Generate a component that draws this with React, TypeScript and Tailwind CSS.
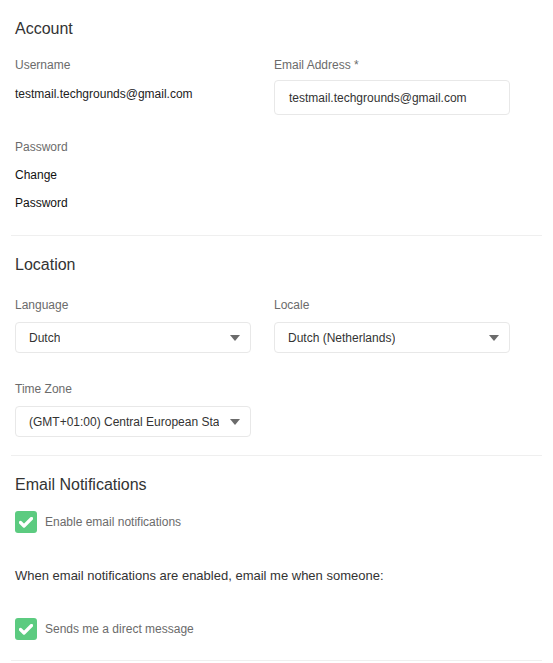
import React from "react";

function Caret() {
  return (
    <svg width="10" height="6" viewBox="0 0 10 6" className="shrink-0">
      <path d="M0 0 L10 0 L5 6 Z" fill="#6b6b6b" />
    </svg>
  );
}

function Select({ value }: { value: string }) {
  return (
    <div className="flex h-[31px] w-[236px] items-center justify-between rounded-[4px] border border-[#e8e8e8] bg-white pl-[13px] pr-[10px]">
      <span className="overflow-hidden whitespace-nowrap text-[12px] leading-[14px] text-[#333]">{value}</span>
      <Caret />
    </div>
  );
}

function Check() {
  return (
    <div className="flex h-[22px] w-[22px] shrink-0 items-center justify-center rounded-[3px] bg-[#5ccb80]">
      <svg width="14" height="11" viewBox="0 0 14 11">
        <path d="M1.5 5.5 L5 9 L12.5 1.5" fill="none" stroke="white" strokeWidth="3.2" strokeLinecap="round" strokeLinejoin="round" />
      </svg>
    </div>
  );
}

export default function App() {
  return (
    <div className="min-h-[663px] w-[553px] bg-white px-[11px] font-['Liberation_Sans',Arial,sans-serif]">
      {/* Account */}
      <section className="border-b border-[#efefef] px-[4px] pb-[25px] pt-[20px]">
        <h2 className="text-[16px] leading-[18px] text-[#333]">Account</h2>
        <div className="mt-[20px] grid grid-cols-[236px_236px] gap-x-[23px]">
          <div>
            <div className="text-[12px] leading-[14px] text-[#6b6b6b]">Username</div>
            <div className="mt-[15px] text-[12px] leading-[14px] text-[#222]">testmail.techgrounds@gmail.com</div>
          </div>
          <div>
            <div className="text-[12px] leading-[14px] text-[#6b6b6b]">Email Address *</div>
            <div className="mt-[8px] flex h-[35px] items-center rounded-[4px] border border-[#e8e8e8] bg-white pl-[14px] text-[12px] leading-[14px] text-[#333]">
              testmail.techgrounds@gmail.com
            </div>
          </div>
        </div>
        <div className="mt-[25px] text-[12px] leading-[14px] text-[#6b6b6b]">Password</div>
        <div className="mt-[14px] text-[12px] leading-[14px] text-[#111]">Change</div>
        <div className="mt-[14px] text-[12px] leading-[14px] text-[#111]">Password</div>
      </section>

      {/* Location */}
      <section className="border-b border-[#efefef] px-[4px] pb-[18px] pt-[20px]">
        <h2 className="text-[16px] leading-[18px] text-[#333]">Location</h2>
        <div className="mt-[24px] grid grid-cols-[236px_236px] gap-x-[23px]">
          <div>
            <div className="text-[12px] leading-[14px] text-[#6b6b6b]">Language</div>
            <div className="mt-[10px]">
              <Select value="Dutch" />
            </div>
          </div>
          <div>
            <div className="text-[12px] leading-[14px] text-[#6b6b6b]">Locale</div>
            <div className="mt-[10px]">
              <Select value="Dutch (Netherlands)" />
            </div>
          </div>
        </div>
        <div className="mt-[29px] text-[12px] leading-[14px] text-[#6b6b6b]">Time Zone</div>
        <div className="mt-[10px]">
          <Select value="(GMT+01:00) Central European Sta" />
        </div>
      </section>

      {/* Email Notifications */}
      <section className="border-b border-[#efefef] px-[4px] pb-[20px] pt-[20px]">
        <h2 className="text-[16px] leading-[18px] text-[#333]">Email Notifications</h2>
        <label className="mt-[17px] flex items-center gap-[8px]">
          <Check />
          <span className="text-[12px] leading-[14px] text-[#6b6b6b]">Enable email notifications</span>
        </label>
        <p className="mt-[35px] text-[13px] leading-[16px] text-[#333]">
          When email notifications are enabled, email me when someone:
        </p>
        <label className="mt-[34px] flex items-center gap-[8px]">
          <Check />
          <span className="text-[12px] leading-[14px] text-[#6b6b6b]">Sends me a direct message</span>
        </label>
      </section>
    </div>
  );
}
